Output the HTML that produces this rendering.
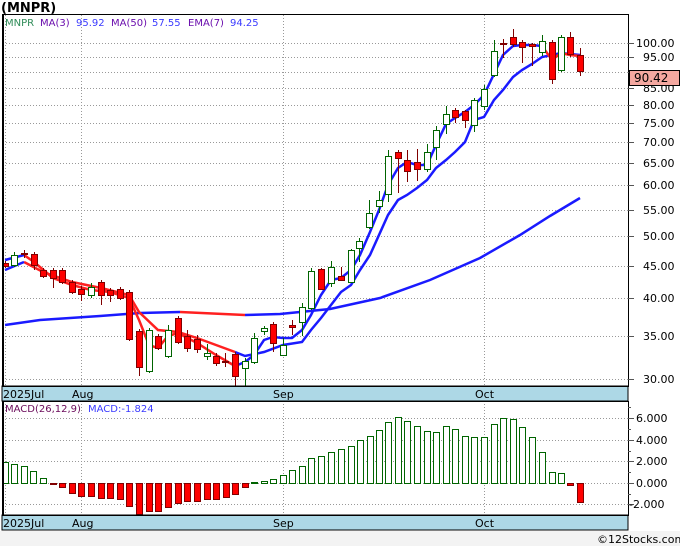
<!DOCTYPE html>
<html><head><meta charset="utf-8"><style>
html,body{margin:0;padding:0;background:#fff;width:680px;height:546px;overflow:hidden}
svg{display:block}
text{font-family:"DejaVu Sans","Liberation Sans",sans-serif}
</style></head><body>
<svg width="680" height="546" viewBox="0 0 680 546" xmlns="http://www.w3.org/2000/svg">
<rect x="0" y="0" width="680" height="546" fill="#fff"/>
<rect x="0" y="531" width="680" height="15" fill="#f3f3f3"/>
<text x="1" y="12" font-size="13" font-weight="bold" fill="#000">(MNPR)</text>
<!-- price panel -->
<g stroke="#999" stroke-width="1" stroke-dasharray="1,2" fill="none">
<line x1="3" y1="43.5" x2="628" y2="43.5"/><line x1="3" y1="57.5" x2="628" y2="57.5"/><line x1="3" y1="72.5" x2="628" y2="72.5"/><line x1="3" y1="88.5" x2="628" y2="88.5"/><line x1="3" y1="105.5" x2="628" y2="105.5"/><line x1="3" y1="123.5" x2="628" y2="123.5"/><line x1="3" y1="142.5" x2="628" y2="142.5"/><line x1="3" y1="163.5" x2="628" y2="163.5"/><line x1="3" y1="185.5" x2="628" y2="185.5"/><line x1="3" y1="210.5" x2="628" y2="210.5"/><line x1="3" y1="236.5" x2="628" y2="236.5"/><line x1="3" y1="266.5" x2="628" y2="266.5"/><line x1="3" y1="298.5" x2="628" y2="298.5"/><line x1="3" y1="336.5" x2="628" y2="336.5"/><line x1="3" y1="379.5" x2="628" y2="379.5"/>
<line x1="5.5" y1="15" x2="5.5" y2="386"/><line x1="81.5" y1="15" x2="81.5" y2="386"/><line x1="283.5" y1="15" x2="283.5" y2="386"/><line x1="484.5" y1="15" x2="484.5" y2="386"/>
<line x1="3" y1="418.5" x2="628" y2="418.5"/><line x1="3" y1="440.5" x2="628" y2="440.5"/><line x1="3" y1="461.5" x2="628" y2="461.5"/><line x1="3" y1="483.5" x2="628" y2="483.5"/><line x1="3" y1="504.5" x2="628" y2="504.5"/>
<line x1="5.5" y1="401" x2="5.5" y2="515"/><line x1="81.5" y1="401" x2="81.5" y2="515"/><line x1="283.5" y1="401" x2="283.5" y2="515"/><line x1="484.5" y1="401" x2="484.5" y2="515"/>
</g>
<text x="5" y="26" font-size="10" fill="#2e8b57">MNPR</text>
<text x="40" y="26" font-size="10" fill="#6a0dad">MA(3)</text>
<text x="76" y="26" font-size="10" fill="#3a3aff">95.92</text>
<text x="111" y="26" font-size="10" fill="#6a0dad">MA(50)</text>
<text x="152" y="26" font-size="10" fill="#3a3aff">57.55</text>
<text x="188" y="26" font-size="10" fill="#6a0dad">EMA(7)</text>
<text x="230" y="26" font-size="10" fill="#3a3aff">94.25</text>
<!-- MA50 -->
<polyline fill="none" stroke="#1a1aff" stroke-width="2.5" points="5,325 40,320 100,316 140,313 180,312"/>
<polyline fill="none" stroke="#ff2020" stroke-width="2.5" points="180,312 245,315"/>
<polyline fill="none" stroke="#1a1aff" stroke-width="2.5" points="245,315 280,314 330,309 380,298 430,280 480,258 520,235 550,216 580,198"/>
<!-- EMA7 -->
<polyline fill="none" stroke="#ff2020" stroke-width="2.5" points="24,262 43,272 72,282 101,288 129,295 139,312 158,330 178,332 197,338 216,345 235,352"/>
<polyline fill="none" stroke="#1a1aff" stroke-width="2.5" points="5,270 24,262"/>
<polyline fill="none" stroke="#1a1aff" stroke-width="2.5" points="235,352 245,356 264,352 283,345 302,342 311,330 321,318 331,305 341,292 351,285 360,270 370,255 379,235 388,215 398,200 407,195 417,188 427,180 436,168 446,160 455,152 465,142 474,120 484,117 494,100 503,90 513,77 522,70 532,64 542,57 552,55 561,53 570,54 580,55"/>
<!-- MA3 -->
<polyline fill="none" stroke="#ff2020" stroke-width="2.5" points="24,255 34,262 53,278 72,285 91,290 110,292 129,298 139,320 149,345 158,348 168,336 178,333 197,343 216,355 235,366"/>
<polyline fill="none" stroke="#1a1aff" stroke-width="2.5" points="5,260 24,255"/>
<polyline fill="none" stroke="#1a1aff" stroke-width="2.5" points="235,366 245,362 254,355 264,340 273,337 283,338 292,338 302,330 311,315 321,295 331,280 341,278 351,270 360,255 370,232 379,210 388,185 398,168 407,162 417,165 427,165 436,145 446,124 455,118 465,112 474,105 484,95 494,74 503,55 513,46 522,45 532,45 542,46"/>
<polyline fill="none" stroke="#ff2020" stroke-width="2.5" points="542,46 552,60 561,53 570,55 580,56"/>
<!-- candles -->
<g stroke-width="1">
<g stroke="#800000">
<line x1="5.5" y1="261" x2="5.5" y2="268"/><line x1="24.5" y1="250" x2="24.5" y2="258"/><line x1="34.5" y1="252" x2="34.5" y2="270"/><line x1="43.5" y1="268" x2="43.5" y2="278"/><line x1="53.5" y1="268" x2="53.5" y2="288"/><line x1="62.5" y1="268" x2="62.5" y2="284"/><line x1="72.5" y1="280" x2="72.5" y2="294"/><line x1="81.5" y1="286" x2="81.5" y2="301"/><line x1="101.5" y1="280" x2="101.5" y2="305"/><line x1="110.5" y1="288" x2="110.5" y2="302"/><line x1="120.5" y1="287" x2="120.5" y2="300"/><line x1="129.5" y1="290" x2="129.5" y2="341"/><line x1="139.5" y1="329" x2="139.5" y2="376"/><line x1="158.5" y1="334" x2="158.5" y2="350"/><line x1="178.5" y1="316" x2="178.5" y2="344"/><line x1="187.5" y1="330" x2="187.5" y2="352"/><line x1="197.5" y1="335" x2="197.5" y2="353"/><line x1="216.5" y1="353" x2="216.5" y2="366"/><line x1="225.5" y1="353" x2="225.5" y2="367"/><line x1="235.5" y1="352" x2="235.5" y2="386"/><line x1="273.5" y1="322" x2="273.5" y2="352"/><line x1="292.5" y1="320" x2="292.5" y2="335"/><line x1="321.5" y1="268" x2="321.5" y2="290"/><line x1="341.5" y1="267" x2="341.5" y2="281"/><line x1="398.5" y1="150" x2="398.5" y2="193"/><line x1="407.5" y1="150" x2="407.5" y2="182"/><line x1="417.5" y1="149" x2="417.5" y2="181"/><line x1="455.5" y1="108" x2="455.5" y2="123"/><line x1="465.5" y1="110" x2="465.5" y2="128"/><line x1="503.5" y1="39" x2="503.5" y2="58"/><line x1="513.5" y1="29" x2="513.5" y2="47"/><line x1="522.5" y1="40" x2="522.5" y2="63"/><line x1="532.5" y1="43" x2="532.5" y2="66"/><line x1="552.5" y1="40" x2="552.5" y2="84"/><line x1="570.5" y1="32" x2="570.5" y2="57"/><line x1="580.5" y1="48" x2="580.5" y2="76"/>
</g>
<g stroke="#006400">
<line x1="14.5" y1="252" x2="14.5" y2="267"/><line x1="91.5" y1="283" x2="91.5" y2="298"/><line x1="149.5" y1="328" x2="149.5" y2="373"/><line x1="168.5" y1="325" x2="168.5" y2="358"/><line x1="207.5" y1="344" x2="207.5" y2="360"/><line x1="245.5" y1="358" x2="245.5" y2="386"/><line x1="254.5" y1="333" x2="254.5" y2="364"/><line x1="264.5" y1="326" x2="264.5" y2="335"/><line x1="283.5" y1="338" x2="283.5" y2="356"/><line x1="302.5" y1="303" x2="302.5" y2="336"/><line x1="311.5" y1="268" x2="311.5" y2="310"/><line x1="331.5" y1="261" x2="331.5" y2="287"/><line x1="351.5" y1="249" x2="351.5" y2="283"/><line x1="359.5" y1="238" x2="359.5" y2="262"/><line x1="369.5" y1="200" x2="369.5" y2="229"/><line x1="379.5" y1="191" x2="379.5" y2="213"/><line x1="388.5" y1="150" x2="388.5" y2="202"/><line x1="427.5" y1="144" x2="427.5" y2="172"/><line x1="436.5" y1="126" x2="436.5" y2="160"/><line x1="446.5" y1="106" x2="446.5" y2="134"/><line x1="474.5" y1="98" x2="474.5" y2="132"/><line x1="484.5" y1="85" x2="484.5" y2="110"/><line x1="494.5" y1="40" x2="494.5" y2="77"/><line x1="542.5" y1="35" x2="542.5" y2="56"/><line x1="561.5" y1="35" x2="561.5" y2="72"/>
</g>
<g fill="#ff0000" stroke="#800000">
<rect x="2.5" y="263.5" width="6" height="3"/><rect x="21.5" y="253.5" width="6" height="1"/><rect x="31.5" y="254.5" width="6" height="11"/><rect x="40.5" y="270.5" width="6" height="6"/><rect x="50.5" y="270.5" width="6" height="8"/><rect x="59.5" y="270.5" width="6" height="12"/><rect x="69.5" y="282.5" width="6" height="10"/><rect x="78.5" y="289.5" width="6" height="5"/><rect x="98.5" y="282.5" width="6" height="13"/><rect x="107.5" y="290.5" width="6" height="5"/><rect x="117.5" y="289.5" width="6" height="9"/><rect x="126.5" y="292.5" width="6" height="47"/><rect x="136.5" y="331.5" width="6" height="36"/><rect x="155.5" y="336.5" width="6" height="12"/><rect x="175.5" y="318.5" width="6" height="24"/><rect x="184.5" y="336.5" width="6" height="12"/><rect x="194.5" y="339.5" width="6" height="10"/><rect x="213.5" y="356.5" width="6" height="7"/><rect x="222.5" y="361.5" width="6" height="1"/><rect x="232.5" y="354.5" width="6" height="22"/><rect x="270.5" y="324.5" width="6" height="19"/><rect x="289.5" y="325.5" width="6" height="2"/><rect x="318.5" y="269.5" width="6" height="20"/><rect x="338.5" y="276.5" width="6" height="4"/><rect x="395.5" y="152.5" width="6" height="6"/><rect x="404.5" y="160.5" width="6" height="11"/><rect x="414.5" y="162.5" width="6" height="7"/><rect x="452.5" y="110.5" width="6" height="7"/><rect x="462.5" y="111.5" width="6" height="9"/><rect x="500.5" y="43.5" width="6" height="1"/><rect x="510.5" y="37.5" width="6" height="7"/><rect x="519.5" y="42.5" width="6" height="5"/><rect x="529.5" y="44.5" width="6" height="2"/><rect x="549.5" y="42.5" width="6" height="37"/><rect x="567.5" y="37.5" width="6" height="17"/><rect x="577.5" y="55.5" width="6" height="16"/>
</g>
<g fill="#fff" stroke="#006400">
<rect x="11.5" y="255.5" width="6" height="10"/><rect x="88.5" y="287.5" width="6" height="8"/><rect x="146.5" y="330.5" width="6" height="41"/><rect x="165.5" y="330.5" width="6" height="26"/><rect x="204.5" y="353.5" width="6" height="3"/><rect x="242.5" y="361.5" width="6" height="7"/><rect x="251.5" y="338.5" width="6" height="24"/><rect x="261.5" y="328.5" width="6" height="3"/><rect x="280.5" y="345.5" width="6" height="10"/><rect x="299.5" y="307.5" width="6" height="15"/><rect x="308.5" y="271.5" width="6" height="37"/><rect x="328.5" y="267.5" width="6" height="16"/><rect x="348.5" y="250.5" width="6" height="32"/><rect x="356.5" y="241.5" width="6" height="7"/><rect x="366.5" y="213.5" width="6" height="14"/><rect x="376.5" y="200.5" width="6" height="6"/><rect x="385.5" y="156.5" width="6" height="38"/><rect x="424.5" y="152.5" width="6" height="17"/><rect x="433.5" y="130.5" width="6" height="17"/><rect x="443.5" y="114.5" width="6" height="10"/><rect x="471.5" y="100.5" width="6" height="25"/><rect x="481.5" y="89.5" width="6" height="17"/><rect x="491.5" y="51.5" width="6" height="24"/><rect x="539.5" y="41.5" width="6" height="11"/><rect x="558.5" y="37.5" width="6" height="33"/>
</g>
</g>
<!-- MACD -->
<text x="5" y="412" font-size="10" fill="#6a0a5a">MACD(26,12,9)</text>
<text x="88" y="412" font-size="10" fill="#3a3aff">MACD:-1.824</text>
<g fill="#fff" stroke="#006400">
<rect x="2.5" y="462.5" width="6" height="21"/><rect x="11.5" y="464.5" width="6" height="19"/><rect x="21.5" y="466.5" width="6" height="17"/><rect x="30.5" y="471.5" width="6" height="12"/><rect x="40.5" y="478.5" width="6" height="5"/>
<rect x="261.5" y="481.5" width="6" height="2"/><rect x="270.5" y="479.5" width="6" height="4"/><rect x="280.5" y="475.5" width="6" height="8"/><rect x="289.5" y="470.5" width="6" height="13"/><rect x="299.5" y="466.5" width="6" height="17"/><rect x="308.5" y="458.5" width="6" height="25"/><rect x="318.5" y="456.5" width="6" height="27"/><rect x="328.5" y="452.5" width="6" height="31"/><rect x="338.5" y="449.5" width="6" height="34"/><rect x="348.5" y="446.5" width="6" height="37"/><rect x="357.5" y="440.5" width="6" height="43"/><rect x="367.5" y="436.5" width="6" height="47"/><rect x="376.5" y="430.5" width="6" height="53"/><rect x="385.5" y="422.5" width="6" height="61"/><rect x="395.5" y="417.5" width="6" height="66"/><rect x="404.5" y="421.5" width="6" height="62"/><rect x="414.5" y="426.5" width="6" height="57"/><rect x="424.5" y="431.5" width="6" height="52"/><rect x="433.5" y="432.5" width="6" height="51"/><rect x="443.5" y="426.5" width="6" height="57"/><rect x="452.5" y="429.5" width="6" height="54"/><rect x="462.5" y="436.5" width="6" height="47"/><rect x="471.5" y="437.5" width="6" height="46"/><rect x="481.5" y="437.5" width="6" height="46"/><rect x="491.5" y="424.5" width="6" height="59"/><rect x="500.5" y="418.5" width="6" height="65"/><rect x="510.5" y="419.5" width="6" height="64"/><rect x="519.5" y="427.5" width="6" height="56"/><rect x="529.5" y="437.5" width="6" height="46"/><rect x="539.5" y="452.5" width="6" height="31"/><rect x="549.5" y="472.5" width="6" height="11"/><rect x="558.5" y="473.5" width="6" height="10"/>
</g>
<line x1="251" y1="483" x2="258" y2="483" stroke="#006400" stroke-width="2"/>
<g fill="#ff0000" stroke="#800000">
<rect x="50.5" y="483.5" width="6" height="1"/><rect x="59.5" y="483.5" width="6" height="4"/><rect x="69.5" y="483.5" width="6" height="10"/><rect x="78.5" y="483.5" width="6" height="13"/><rect x="88.5" y="483.5" width="6" height="13"/><rect x="98.5" y="483.5" width="6" height="15"/><rect x="107.5" y="483.5" width="6" height="15"/><rect x="117.5" y="483.5" width="6" height="16"/><rect x="126.5" y="483.5" width="6" height="23"/><rect x="136.5" y="483.5" width="6" height="31"/><rect x="146.5" y="483.5" width="6" height="28"/><rect x="155.5" y="483.5" width="6" height="28"/><rect x="165.5" y="483.5" width="6" height="24"/><rect x="175.5" y="483.5" width="6" height="20"/><rect x="184.5" y="483.5" width="6" height="18"/><rect x="194.5" y="483.5" width="6" height="18"/><rect x="204.5" y="483.5" width="6" height="16"/><rect x="213.5" y="483.5" width="6" height="16"/><rect x="223.5" y="483.5" width="6" height="14"/><rect x="232.5" y="483.5" width="6" height="11"/><rect x="242.5" y="483.5" width="6" height="4"/><rect x="567.5" y="483.5" width="6" height="2"/><rect x="577.5" y="483.5" width="6" height="19"/>
</g>
<!-- date bands -->
<rect x="2" y="386" width="626" height="15" fill="#add8e6" stroke="#000"/>
<rect x="2" y="515" width="626" height="15" fill="#add8e6" stroke="#000"/>
<g font-size="11" fill="#000">
<text x="3" y="398">2025Jul</text><text x="72" y="398">Aug</text><text x="273" y="398">Sep</text><text x="475" y="398">Oct</text>
<text x="3" y="527">2025Jul</text><text x="72" y="527">Aug</text><text x="273" y="527">Sep</text><text x="475" y="527">Oct</text>
</g>
<!-- frames -->
<rect x="2.5" y="14.5" width="626" height="372" fill="none" stroke="#000"/>
<line x1="3" y1="14" x2="3" y2="386" stroke="#000" stroke-width="2"/>
<rect x="2.5" y="401.5" width="626" height="114" fill="none" stroke="#000"/>
<line x1="3" y1="401" x2="3" y2="515" stroke="#000" stroke-width="2"/>
<!-- right axis -->
<g stroke="#555">
<line x1="628" y1="43.5" x2="634" y2="43.5"/><line x1="628" y1="57.5" x2="634" y2="57.5"/><line x1="628" y1="72.5" x2="634" y2="72.5"/><line x1="628" y1="88.5" x2="634" y2="88.5"/><line x1="628" y1="105.5" x2="634" y2="105.5"/><line x1="628" y1="123.5" x2="634" y2="123.5"/><line x1="628" y1="142.5" x2="634" y2="142.5"/><line x1="628" y1="163.5" x2="634" y2="163.5"/><line x1="628" y1="185.5" x2="634" y2="185.5"/><line x1="628" y1="210.5" x2="634" y2="210.5"/><line x1="628" y1="236.5" x2="634" y2="236.5"/><line x1="628" y1="266.5" x2="634" y2="266.5"/><line x1="628" y1="298.5" x2="634" y2="298.5"/><line x1="628" y1="336.5" x2="634" y2="336.5"/><line x1="628" y1="379.5" x2="634" y2="379.5"/>
<line x1="628" y1="418.5" x2="634" y2="418.5"/><line x1="628" y1="440.5" x2="634" y2="440.5"/><line x1="628" y1="461.5" x2="634" y2="461.5"/><line x1="628" y1="483.5" x2="634" y2="483.5"/><line x1="628" y1="504.5" x2="634" y2="504.5"/>
<line x1="628" y1="407.5" x2="631" y2="407.5"/><line x1="628" y1="429.5" x2="631" y2="429.5"/><line x1="628" y1="451.5" x2="631" y2="451.5"/><line x1="628" y1="472.5" x2="631" y2="472.5"/><line x1="628" y1="494.5" x2="631" y2="494.5"/>
</g>
<g font-size="11" fill="#000">
<text x="636" y="47">100.00</text><text x="643" y="61">95.00</text><text x="643" y="92">85.00</text><text x="643" y="109">80.00</text><text x="643" y="127">75.00</text><text x="643" y="146">70.00</text><text x="643" y="167">65.00</text><text x="643" y="189">60.00</text><text x="643" y="214">55.00</text><text x="643" y="240">50.00</text><text x="643" y="270">45.00</text><text x="643" y="302">40.00</text><text x="643" y="340">35.00</text><text x="643" y="383">30.00</text>
<text x="636" y="422">6.000</text><text x="636" y="444">4.000</text><text x="636" y="465">2.000</text><text x="636" y="487">0.000</text><text x="629" y="508">-2.000</text>
</g>
<rect x="629.5" y="70.5" width="50" height="15" fill="#f4a8a0" stroke="#000"/>
<text x="634" y="82" font-size="12" fill="#000">90.42</text>
<text x="597" y="543" font-size="11" fill="#000">©12Stocks.com</text>
</svg>
</body></html>
